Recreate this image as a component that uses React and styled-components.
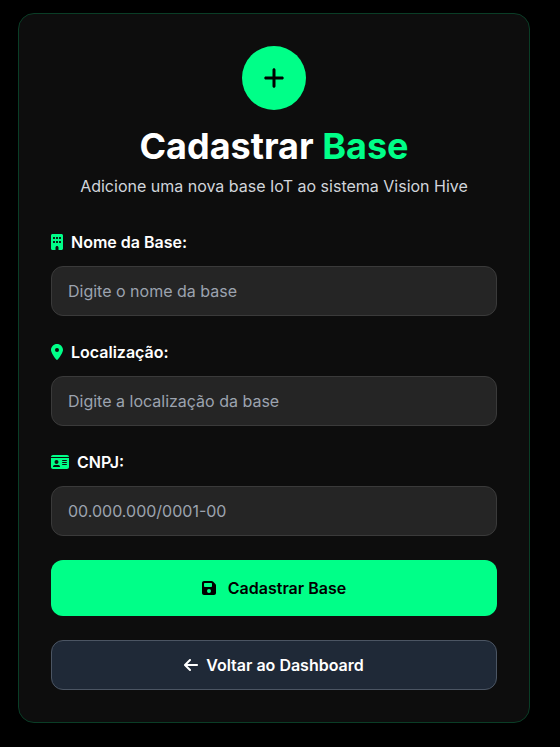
import React from "react";
import styled, { createGlobalStyle } from "styled-components";
import { FaArrowLeft, FaBuilding, FaFloppyDisk, FaIdCard, FaLocationDot, FaPlus } from "react-icons/fa6";

const GlobalStyle = createGlobalStyle`
  *, *::before, *::after { box-sizing: border-box; }
  body {
    margin: 0;
    background: #000;
    color: #fff;
    font-family: Inter, sans-serif;
    font-size: 16px;
    line-height: 24px;
  }
`;

const Page = styled.main`
  display: flex;
  justify-content: center;
  padding: 13px 30px 24px 18px;
`;

const Card = styled.section`
  width: 100%;
  max-width: 512px;
  padding: 32px;
  background: #0d0d0d;
  border: 1px solid #0a3d26;
  border-radius: 16px;
`;

const Header = styled.header`
  display: flex;
  flex-direction: column;
  align-items: center;
  margin-bottom: 32px;
  text-align: center;
`;

const Badge = styled.div`
  display: grid;
  place-items: center;
  width: 64px;
  height: 64px;
  margin-bottom: 16px;
  border-radius: 50%;
  background: #00ff88;
  color: #000;
  font-size: 24px;
`;

const Title = styled.h1`
  margin: 0 0 8px;
  font-size: 36px;
  line-height: 40px;
  font-weight: 700;
`;

const Accent = styled.span`
  color: #00ff88;
`;

const Subtitle = styled.p`
  margin: 0;
  color: #d1d5db;
`;

const Icon = styled.span`
  display: flex;
  flex: none;
  width: ${({ $width }) => $width}px;
  color: ${({ $accent }) => ($accent ? "#00ff88" : "inherit")};

  svg {
    width: 100%;
    height: 1em;
  }
`;

const Form = styled.form`
  display: flex;
  flex-direction: column;
  gap: 24px;
`;

const Field = styled.div`
  display: flex;
  flex-direction: column;
  gap: 12px;
`;

const Label = styled.label`
  display: flex;
  align-items: center;
  gap: 8px;
  font-weight: 600;
`;

const Input = styled.input`
  width: 100%;
  height: 50px;
  padding: 12px 16px;
  border: 1px solid #3a3a3a;
  border-radius: 12px;
  background: #252525;
  color: #fff;
  font: inherit;

  &::placeholder { color: #9ca3af; opacity: 1; }
`;

const SubmitButton = styled.button`
  display: flex;
  align-items: center;
  justify-content: center;
  gap: 12px;
  padding: 16px 24px;
  border: 0;
  border-radius: 12px;
  background: #00ff88;
  color: #000;
  font: inherit;
  font-weight: 600;
  cursor: pointer;
`;

const BackLink = styled.a`
  display: flex;
  align-items: center;
  justify-content: center;
  gap: 8px;
  padding: 12px 24px;
  border: 1px solid #4b5563;
  border-radius: 12px;
  background: #1f2937;
  color: #fff;
  font-weight: 600;
  text-decoration: none;
`;

const fields = [
  { id: "nome", label: "Nome da Base:", placeholder: "Digite o nome da base", Glyph: FaBuilding, width: 12 },
  { id: "localizacao", label: "Localização:", placeholder: "Digite a localização da base", Glyph: FaLocationDot, width: 12 },
  { id: "cnpj", label: "CNPJ:", placeholder: "00.000.000/0001-00", Glyph: FaIdCard, width: 18 },
];

export default function App() {
  return (
    <>
      <GlobalStyle />
      <Page>
        <Card>
          <Header>
            <Badge><FaPlus aria-hidden="true" /></Badge>
            <Title>Cadastrar <Accent>Base</Accent></Title>
            <Subtitle>Adicione uma nova base IoT ao sistema Vision Hive</Subtitle>
          </Header>
          <Form onSubmit={(event) => event.preventDefault()}>
            {fields.map(({ id, label, placeholder, Glyph, width }) => (
              <Field key={id}>
                <Label htmlFor={id}>
                  <Icon $width={width} $accent><Glyph aria-hidden="true" /></Icon>
                  {label}
                </Label>
                <Input id={id} name={id} type="text" placeholder={placeholder} />
              </Field>
            ))}
            <SubmitButton type="submit">
              <Icon $width={14}><FaFloppyDisk aria-hidden="true" /></Icon>
              Cadastrar Base
            </SubmitButton>
            <BackLink href="#dashboard">
              <Icon $width={14}><FaArrowLeft aria-hidden="true" /></Icon>
              Voltar ao Dashboard
            </BackLink>
          </Form>
        </Card>
      </Page>
    </>
  );
}
